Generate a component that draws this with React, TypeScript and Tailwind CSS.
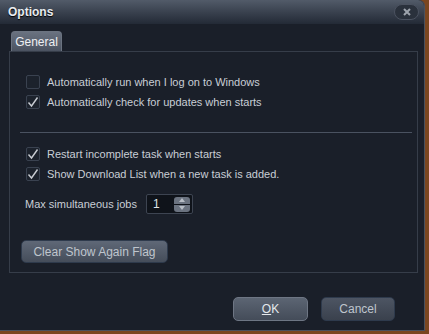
import React from 'react';

function Check({ checked }: { checked: boolean }) {
  return (
    <span className="flex h-[14px] w-[14px] shrink-0 items-center justify-center rounded-[2px] border border-[#3a4250] bg-[#1c222c]">
      {checked && (
        <svg width="12" height="12" viewBox="0 0 12 12">
          <path d="M1.5 6.5 L4.5 10 L10.5 1.5" fill="none" stroke="#c8ccd2" strokeWidth="1.4" />
        </svg>
      )}
    </span>
  );
}

function Row({ checked, label }: { checked: boolean; label: string }) {
  return (
    <label className="flex h-[20px] items-center gap-[7px]">
      <Check checked={checked} />
      <span className="text-[#c9ced6]">{label}</span>
    </label>
  );
}

export default function App() {
  return (
    <div
      className="h-[334px] w-[429px] bg-[#7a4620] text-[11px]"
      style={{ fontFamily: '"Liberation Sans", Arial, sans-serif' }}
    >
      <div className="flex h-[331px] w-[425px] flex-col rounded-tr-[6px] border-r border-b border-[#48505e] bg-[#1a1f29]">
        <div className="flex h-[24px] items-center justify-between rounded-tr-[6px] bg-gradient-to-b from-[#525b69] to-[#232a36] pr-[5px] pl-[8px]">
          <span className="text-[12px] font-bold text-[#e8ecf0] [text-shadow:0_1px_1px_#000]">Options</span>
          <span className="flex h-[16px] w-[25px] items-center justify-center rounded-full border border-[#4b5260] bg-[#2a313c]">
            <svg width="8" height="8" viewBox="0 0 8 8">
              <path d="M1 1 L7 7 M7 1 L1 7" stroke="#9ea4ad" strokeWidth="2" />
            </svg>
          </span>
        </div>

        <div className="px-[9px] pt-[7px]">
          <div className="ml-[2px] flex h-[20px] w-[51px] items-center justify-center rounded-t-[4px] border border-b-0 border-[#6b7380] bg-gradient-to-b from-[#6a7280] to-[#4b5361] text-[12px] text-[#eef0f3]">
            General
          </div>
          <div className="flex h-[222px] w-[409px] flex-col border border-[#363d49] px-[16px] pt-[20px]">
            <Row checked={false} label="Automatically run when I log on to Windows" />
            <Row checked={true} label="Automatically check for updates when starts" />
            <div className="mt-[20px] mb-[11px] mr-[-11px] ml-[-6px] h-px bg-[#4a5260]" />
            <Row checked={true} label="Restart incomplete task when starts" />
            <Row checked={true} label="Show Download List when a new task is added." />
            <div className="mt-[10px] flex items-center gap-[9px]">
              <span className="ml-[-1px] text-[#c9ced6]">Max simultaneous jobs</span>
              <div className="flex h-[20px] w-[47px] items-center justify-between rounded-[2px] border border-[#3d4451] bg-[#0f131a] pr-[2px] pl-[6px]">
                <span className="text-[12px] text-[#dfe3e8]">1</span>
                <div className="flex flex-col gap-px">
                  <span className="flex h-[7px] w-[16px] items-center justify-center rounded-t-[3px] bg-[#6b7380]">
                    <svg width="6" height="4" viewBox="0 0 6 4"><path d="M0 4 L3 0 L6 4Z" fill="#b8bec6" /></svg>
                  </span>
                  <span className="flex h-[7px] w-[16px] items-center justify-center rounded-b-[3px] bg-[#6b7380]">
                    <svg width="6" height="4" viewBox="0 0 6 4"><path d="M0 0 L3 4 L6 0Z" fill="#b8bec6" /></svg>
                  </span>
                </div>
              </div>
            </div>
            <button className="mt-[26px] ml-[-5px] flex h-[23px] w-[147px] items-center justify-center rounded-[5px] border border-[#2e3a4c] bg-gradient-to-b from-[#5f6877] to-[#454d5a] text-[12px] text-[#bfc5cd]">
              Clear Show Again Flag
            </button>
          </div>
        </div>

        <div className="mt-[24px] flex justify-end gap-[13px] pr-[29px]">
          <button className="flex h-[24px] w-[75px] items-center justify-center rounded-[5px] border border-[#6e7684] bg-gradient-to-b from-[#5c6573] to-[#444c59] text-[12px] text-[#e4e8ec]">
            <span className="underline">O</span>K
          </button>
          <button className="flex h-[24px] w-[74px] items-center justify-center rounded-[5px] border border-[#2e3a4c] bg-gradient-to-b from-[#4d5563] to-[#3a414d] text-[12px] text-[#bfc5cd]">
            Cancel
          </button>
        </div>
      </div>
    </div>
  );
}
